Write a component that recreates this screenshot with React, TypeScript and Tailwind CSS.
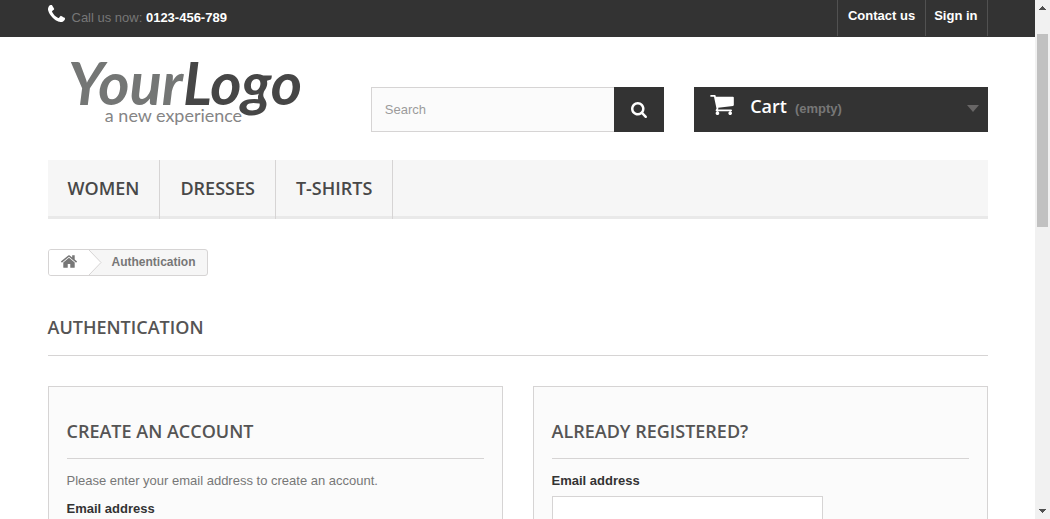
import React from 'react'

type IconProps = { className: string; viewBox: string; d: string }

function Icon({ className, viewBox, d }: IconProps) {
  return (
    <svg className={className} viewBox={viewBox} fill="currentColor" aria-hidden="true">
      <path d={d} />
    </svg>
  )
}

const PHONE =
  'M1600 1240q0 27-10 70.500t-21 68.500q-21 50-122 106-94 51-186 51-27 0-53-3.500t-57-12.500-47-14.500-55.500-20.500-49.500-18q-98-35-175-83-127-79-264-216t-216-264q-48-77-83-175-3-9-18-49.500t-20.500-55.500-14.500-47-12.500-57-3.500-53q0-92 51-186 56-101 106-122 25-11 68.500-21t70.500-10q14 0 21 3 18 6 53 76 11 19 30 54t35 63.500 31 53.500q3 4 17.500 25t21.500 35.500 7 28.500q0 20-28.500 50t-62 55-62 53-28.500 46q0 9 5 22.500t8.500 20.500 14 24 11.500 19q76 137 174 235t235 174q2 1 19 11.500t24 14 20.500 8.500 22.500 5q18 0 46-28.500t53-62 55-62 50-28.500q14 0 28.500 7t35.500 21.500 25 17.500q25 15 53.500 31t63.500 35 54 30q70 35 76 53 3 7 3 21z'
const SEARCH =
  'M1216 832q0-185-131.500-316.500t-316.500-131.500-316.500 131.500-131.500 316.500 131.500 316.500 316.500 131.500 316.500-131.500 131.500-316.500zm512 832q0 52-38 90t-90 38q-54 0-90-38l-343-342q-179 124-399 124-143 0-273.500-55.500t-225-150-150-225-55.500-273.500 55.500-273.500 150-225 225-150 273.500-55.500 273.500 55.500 225 150 150 225 55.500 273.500q0 220-124 399l343 343q37 37 37 90z'
const CART =
  'M704 1536q0 52-38 90t-90 38-90-38-38-90 38-90 90-38 90 38 38 90zm896 0q0 52-38 90t-90 38-90-38-38-90 38-90 90-38 90 38 38 90zm128-1088v512q0 24-16.500 42.500t-40.500 21.500l-1044 122q13 60 13 70 0 16-24 64h920q26 0 45 19t19 45-19 45-45 19h-1024q-26 0-45-19t-19-45q0-11 8-31.500t16-36 21.500-40 15.500-29.500l-177-823h-204q-26 0-45-19t-19-45 19-45 45-19h256q16 0 28.500 6.500t19.500 15.500 13 24.500 8 26 5.500 29.500 4.500 26h1201q26 0 45 19t19 45z'
const HOME =
  'M1472 992v480q0 26-19 45t-45 19h-384v-384h-256v384h-384q-26 0-45-19t-19-45v-480q0-1 .5-3t.5-3l575-474 575 474q1 2 1 6zm223-69l-62 74q-8 9-21 11h-3q-13 0-21-7l-692-577-692 577q-12 8-24 7-13-2-21-11l-62-74q-8-10-7-23.500t11-21.500l719-599q32-26 76-26t76 26l244 204v-195q0-14 9-23t23-9h192q14 0 23 9t9 23v408l219 182q10 8 11 21.500t-7 23.500z'

const container = 'mx-auto w-full max-w-[970px] px-[15px]'
const display = "font-['Open_Sans',sans-serif] text-lg leading-6 font-semibold"
const heading = `${display} uppercase text-[#555454]`

function TopBar() {
  return (
    <div className="bg-[#333333] pb-px">
      <div className={`${container} flex h-9 justify-between`}>
        <p className="flex items-start gap-[7px] text-[#777777]">
          <Icon className="mt-[5px] h-[17px] w-[17px] text-white" viewBox="192 128 1408 1408" d={PHONE} />
          <span className="pt-[9px]">
            Call us now: <strong className="text-white">0123-456-789</strong>
          </span>
        </p>
        <nav className="flex font-bold text-white" aria-label="Account">
          <a href="#contact" className="border-l border-[#515151] px-[10px] pt-[7px]">
            Contact us
          </a>
          <a href="#login" className="border-x border-[#515151] px-2 pt-[7px] pr-[9px]">
            Sign in
          </a>
        </nav>
      </div>
    </div>
  )
}

function Logo() {
  return (
    <a href="#home" aria-label="Your Logo, a new experience" className="block w-full">
      <svg viewBox="0 0 294 80" className="h-20 w-full overflow-visible" preserveAspectRatio="xMinYMin meet">
        <text x="20" y="57" fontFamily="Lato, sans-serif" fontSize="60" fontWeight="700" fontStyle="italic" fill="#747675">
          Your<tspan fill="#464646">Logo</tspan>
        </text>
        <text x="57" y="74" fontFamily="Lato, sans-serif" fontSize="18" fill="#858585">
          a new experience
        </text>
      </svg>
    </a>
  )
}

function Header() {
  return (
    <header className={`${container} pt-[11px]`}>
      <div className="grid grid-cols-3 gap-[30px]">
        <Logo />
        <form className="mt-[39px] flex h-[45px]" onSubmit={(e) => e.preventDefault()}>
          <input
            type="search"
            aria-label="Search"
            placeholder="Search"
            className="min-w-0 flex-1 border border-r-0 border-[#d6d4d4] bg-[#fbfbfb] px-[13px] text-[#686666] placeholder:text-[#9c9b9b]"
          />
          <button type="submit" aria-label="Submit search" className="flex w-[50px] items-center justify-center bg-[#333333] text-white">
            <Icon className="h-4 w-4" viewBox="64 128 1664 1664" d={SEARCH} />
          </button>
        </form>
        <a href="#cart" className="mt-[39px] flex h-[45px] items-start bg-[#333333] pr-[9px] pl-4 text-[#777777]">
          <Icon className="mt-2 h-5 w-6 text-white" viewBox="64 256 1664 1408" d={CART} />
          <b className={`${display} ml-4 pt-[7px] text-white`}>Cart</b>
          <span className="ml-2 pt-[13px] font-bold">(empty)</span>
          <svg className="mt-[18px] ml-auto h-[7px] w-3" viewBox="0 0 12 7" fill="#686666" aria-hidden="true">
            <path d="M0 0h12L6 7z" />
          </svg>
        </a>
      </div>
      <nav className="mt-7 flex h-[59px] bg-[#f6f6f6] shadow-[inset_0_-3px_0_#e9e9e9]" aria-label="Categories">
        {['Women', 'Dresses', 'T-shirts'].map((name) => (
          <a key={name} href={`#${name}`} className={`${display} border-r border-[#d6d4d4] px-5 pt-4 text-[#484848] uppercase`}>
            {name}
          </a>
        ))}
      </nav>
    </header>
  )
}

function Breadcrumb() {
  return (
    <nav
      aria-label="Breadcrumb"
      className="mt-[30px] flex h-[27px] w-fit overflow-hidden rounded-[3px] border border-[#d6d4d4] bg-[#f6f6f6] text-xs font-bold text-[#777777]"
    >
      <a href="#home" aria-label="Home" className="flex items-start bg-white pt-[5px] pl-3">
        <Icon className="h-[13px] w-4" viewBox="89 250 1614 1290" d={HOME} />
      </a>
      <svg className="h-[25px] w-[25px] bg-[#f6f6f6]" viewBox="0 0 25 25" aria-hidden="true">
        <path d="M0 0h12l12 12.500L12 25H0z" fill="#fff" />
        <path d="M12 0l12 12.500L12 25" fill="none" stroke="#d6d4d4" />
      </svg>
      <span className="pr-[11px] pl-[10px] leading-6">Authentication</span>
    </nav>
  )
}

const panel = 'h-[400px] border border-[#d6d4d4] bg-[#fbfbfb] px-[18px] pt-8'
const panelHeading = `${heading} border-b border-[#d6d4d4] pb-[15px]`
const field = 'mt-[6px] block h-8 w-[271px] border border-[#d6d4d4] bg-white px-2'

function Forms() {
  return (
    <div className="mt-[30px] grid grid-cols-2 gap-[30px]">
      <form className={panel} onSubmit={(e) => e.preventDefault()}>
        <h3 className={panelHeading}>Create an account</h3>
        <p className="mt-[13px]">Please enter your email address to create an account.</p>
        <label htmlFor="email-create" className="mt-[10px] block font-bold text-[#333333]">
          Email address
        </label>
        <input id="email-create" type="email" className={field} />
      </form>
      <form className={panel} onSubmit={(e) => e.preventDefault()}>
        <h3 className={panelHeading}>Already registered?</h3>
        <label htmlFor="email" className="mt-[13px] block font-bold text-[#333333]">
          Email address
        </label>
        <input id="email" type="email" className={field} />
      </form>
    </div>
  )
}

function Scrollbar() {
  return (
    <div className="flex w-[15px] shrink-0 flex-col items-center justify-between bg-[#f1f1f1] py-[6px]" aria-hidden="true">
      <svg className="h-1 w-[7px]" viewBox="0 0 7 4" fill="#505050">
        <path d="M3 0h1v1h1v1h1v1h1v1H0V3h1V2h1V1h1z" />
      </svg>
      <div className="mt-6 h-[193px] w-[11px] bg-[#c1c1c1]" />
      <svg className="mt-auto h-1 w-[7px]" viewBox="0 0 7 4" fill="#505050">
        <path d="M0 0h7v1H6v1H5v1H4v1H3V3H2V2H1V1H0z" />
      </svg>
    </div>
  )
}

export default function App() {
  return (
    <div className="flex h-screen overflow-hidden bg-white font-['Liberation_Sans',Arial,sans-serif] text-[13px] leading-[18px] text-[#777777]">
      <div className="min-w-0 flex-1 overflow-hidden">
        <TopBar />
        <Header />
        <main className={container}>
          <Breadcrumb />
          <h1 className={`${heading} mt-[39px] border-b border-[#d6d4d4] pb-4`}>Authentication</h1>
          <Forms />
        </main>
      </div>
      <Scrollbar />
    </div>
  )
}
